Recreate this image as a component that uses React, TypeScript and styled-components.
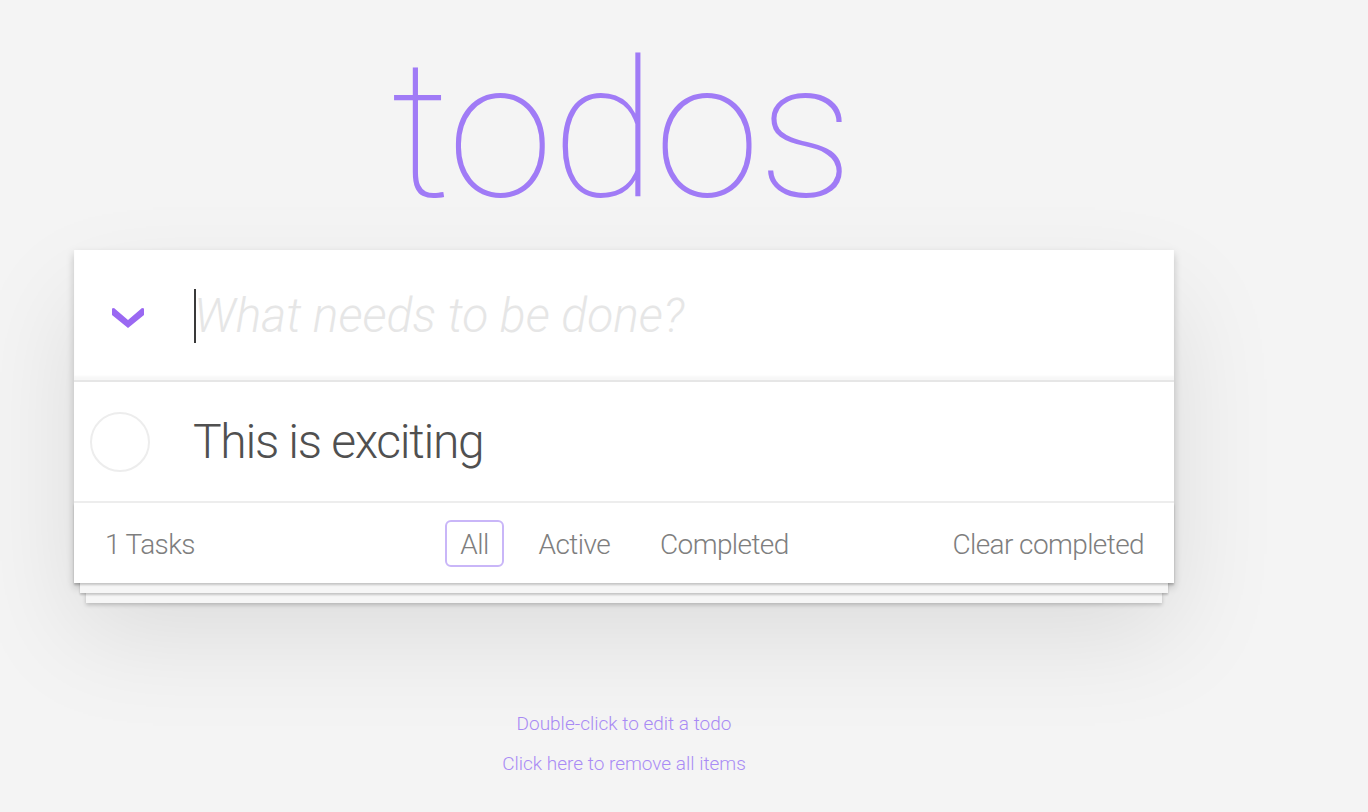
import React from "react";
import styled, { createGlobalStyle } from "styled-components";

const GlobalStyle = createGlobalStyle`
  html, body { margin: 0; padding: 0; }
  body {
    background: #f4f4f4;
    font-family: Roboto, "Liberation Sans", sans-serif;
    -webkit-font-smoothing: antialiased;
    color: #4d4d4d;
  }
  * { box-sizing: border-box; }
`;

const Page = styled.div`
  width: 1100px;
  margin-left: 74px;
  padding-top: 35px;
`;

const Title = styled.h1`
  margin: 0 0 23px;
  height: 192px;
  font-size: 192px;
  line-height: 192px;
  font-weight: 100;
  letter-spacing: -2px;
  text-align: center;
  color: #a07bf6;
  padding-right: 6px;
`;

const Card = styled.section`
  position: relative;
  background: #fff;
  box-shadow: 0 4px 8px rgba(0, 0, 0, 0.2), 0 50px 100px rgba(0, 0, 0, 0.1);
`;

const Header = styled.div`
  display: flex;
  align-items: center;
  height: 130px;
  box-shadow: inset 0 -4px 2px rgba(0, 0, 0, 0.03);
`;

const ToggleCell = styled.div`
  width: 120px;
  padding: 6px 0 0 38px;
  display: flex;
  align-items: center;
`;

const InputWrap = styled.div`
  position: relative;
  flex: 1;
  height: 100%;
  display: flex;
  align-items: center;
`;

const NewTodo = styled.input`
  width: 100%;
  border: 0;
  outline: none;
  background: transparent;
  padding: 0;
  font-family: inherit;
  font-size: 48px;
  font-weight: 300;
  color: #4d4d4d;
  &::placeholder {
    font-style: italic;
    font-weight: 300;
    color: #e6e6e6;
  }
`;

const Caret = styled.span`
  position: absolute;
  left: 0;
  top: 39px;
  width: 2px;
  height: 54px;
  background: #3a3a3a;
`;

const List = styled.ul`
  list-style: none;
  margin: 0;
  padding: 0;
  border-top: 2px solid #e6e6e6;
`;

const Item = styled.li`
  display: flex;
  align-items: center;
  height: 121px;
  border-bottom: 2px solid #ededed;
`;

const Check = styled.span`
  width: 60px;
  height: 60px;
  margin-left: 16px;
  margin-right: 43px;
  border: 2px solid #ededed;
  border-radius: 50%;
`;

const ItemText = styled.label`
  font-size: 48px;
  font-weight: 300;
  letter-spacing: -1.3px;
  color: #505050;
`;

const Footer = styled.footer`
  display: grid;
  grid-template-columns: 1fr auto 1fr;
  align-items: center;
  height: 80px;
  padding: 0 30px 0 31px;
  font-size: 28px;
  font-weight: 300;
  letter-spacing: -0.6px;
  color: #7e7e7e;
  background: #fff;
  box-shadow: 0 2px 2px rgba(0, 0, 0, 0.2), 0 16px 0 -6px #f6f6f6,
    0 18px 2px -6px rgba(0, 0, 0, 0.2), 0 32px 0 -12px #f6f6f6,
    0 34px 4px -12px rgba(0, 0, 0, 0.2);
`;

const Count = styled.span`
  padding-top: 2px;
`;

const Filters = styled.ul`
  display: flex;
  gap: 20px;
  list-style: none;
  margin: 0;
  padding: 0;
`;

const FilterLink = styled.a<{ $selected?: boolean }>`
  display: block;
  padding: 5px 13px 3px;
  line-height: 35px;
  border: 2px solid ${(p) => (p.$selected ? "#c9b6f8" : "transparent")};
  border-radius: 6px;
  color: #7e7e7e;
  text-decoration: none;
`;

const Clear = styled.button`
  justify-self: end;
  border: 0;
  background: none;
  padding: 2px 0 0;
  font-family: inherit;
  font-size: 28px;
  font-weight: 300;
  letter-spacing: -0.6px;
  color: #7e7e7e;
`;

const Info = styled.div`
  margin-top: 121px;
  text-align: center;
  font-size: 19px;
  font-weight: 300;
  color: #a98bf5;
  p {
    margin: 0;
    line-height: 40px;
  }
`;

const Chevron = () => (
  <svg width="32" height="20" viewBox="0 0 32 20">
    <polygon
      points="0,0.6 2,0 16,12 30,0 32,0.6 32,7 16,20 0,7"
      fill="#9a68f2"
    />
  </svg>
);

export default function App() {
  return (
    <>
      <GlobalStyle />
      <Page>
        <Title>todos</Title>
        <Card>
          <Header>
            <ToggleCell>
              <Chevron />
            </ToggleCell>
            <InputWrap>
              <NewTodo placeholder="What needs to be done?" />
              <Caret />
            </InputWrap>
          </Header>
          <List>
            <Item>
              <Check />
              <ItemText>This is exciting</ItemText>
            </Item>
          </List>
          <Footer>
            <Count>1 Tasks</Count>
            <Filters>
              <li>
                <FilterLink $selected href="#/">All</FilterLink>
              </li>
              <li>
                <FilterLink href="#/active">Active</FilterLink>
              </li>
              <li>
                <FilterLink href="#/completed">Completed</FilterLink>
              </li>
            </Filters>
            <Clear>Clear completed</Clear>
          </Footer>
        </Card>
        <Info>
          <p>Double-click to edit a todo</p>
          <p>Click here to remove all items</p>
        </Info>
      </Page>
    </>
  );
}
